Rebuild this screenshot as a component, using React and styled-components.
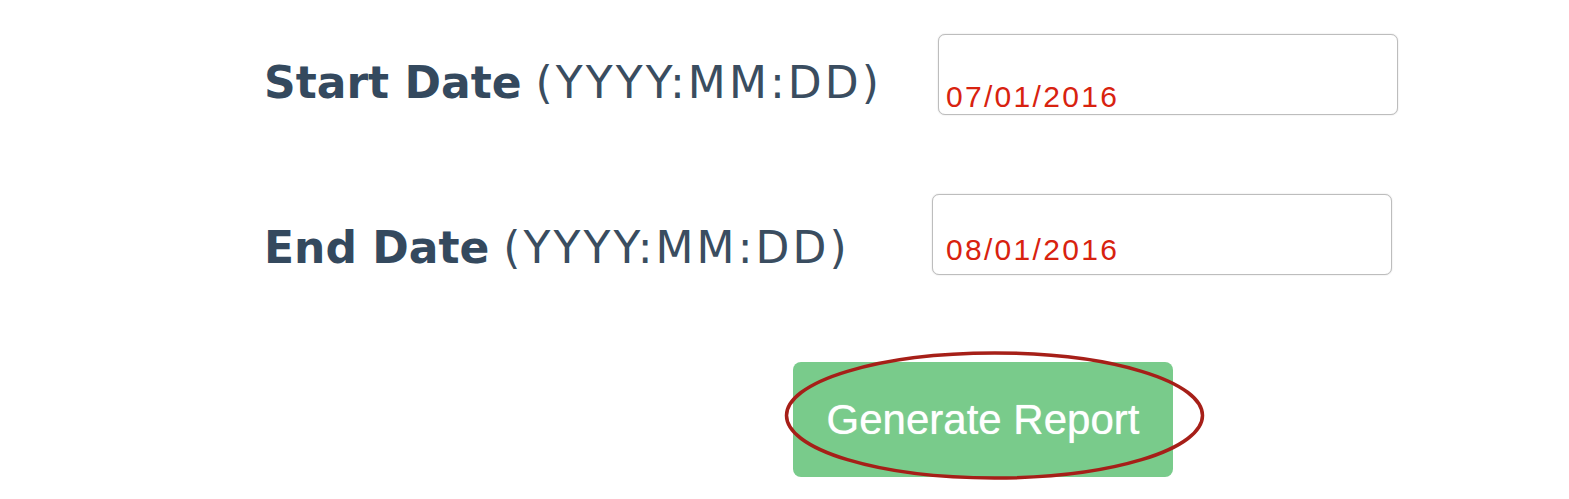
import styled, { createGlobalStyle } from "styled-components";

const GlobalStyle = createGlobalStyle`
  body {
    margin: 0;
    background: #ffffff;
  }
`;

const Page = styled.main`
  padding: 34px 0 0 264px;
  width: 1569px;
  height: 499px;
  box-sizing: border-box;
  overflow: hidden;
`;

const Row = styled.div`
  display: grid;
  grid-template-columns: 674px 460px;
  align-items: start;
  margin-bottom: ${(p) => p.$gap}px;
`;

const Label = styled.label`
  margin-top: ${(p) => p.$top}px;
  font-family: "DejaVu Sans", Verdana, sans-serif;
  font-size: 44px;
  line-height: 1;
  color: #34495e;
  white-space: nowrap;
  strong {
    font-weight: bold;
  }
`;

const Format = styled.span`
  letter-spacing: 3.1px;
  color: #3a4d60;
`;

const DateInput = styled.input`
  box-sizing: border-box;
  width: 460px;
  height: 81px;
  margin-left: ${(p) => p.$nudge || 0}px;
  padding: ${(p) => p.$padTop}px 6px 0 ${(p) => p.$padLeft}px;
  border: 1px solid #bdbdbd;
  border-radius: 7px;
  box-shadow: 0 0 1.5px rgba(0, 0, 0, 0.2);
  background: #ffffff;
  font-family: "Liberation Sans", Arial, sans-serif;
  font-size: 30px;
  letter-spacing: 2.3px;
  color: #d8220f;
  outline: none;
`;

const ButtonWrap = styled.div`
  position: relative;
  width: 380px;
  margin-left: 529px;
`;

const Button = styled.button`
  width: 380px;
  height: 115px;
  border: none;
  border-radius: 8px;
  background: #79cb8b;
  color: #ffffff;
  font-family: "Liberation Sans", Arial, sans-serif;
  font-size: 42px;
  text-shadow: 0 0 1px rgba(255, 255, 255, 0.8);
  cursor: pointer;
`;

const Circle = styled.svg`
  position: absolute;
  left: -9px;
  top: -12px;
  pointer-events: none;
`;

export default function App() {
  return (
    <>
      <GlobalStyle />
      <Page>
        <Row $gap={79}>
          <Label $top={27}>
            <strong>Start Date</strong> <Format>(YYYY:MM:DD)</Format>
          </Label>
          <DateInput readOnly defaultValue="07/01/2016" $padTop={44} $padLeft={7} />
        </Row>
        <Row $gap={87}>
          <Label $top={32}>
            <strong>End Date</strong> <Format>(YYYY:MM:DD)</Format>
          </Label>
          <DateInput
            readOnly
            defaultValue="08/01/2016"
            $padTop={30}
            $padLeft={13}
            $nudge={-6}
          />
        </Row>
        <ButtonWrap>
          <Button type="button">Generate Report</Button>
          <Circle width="422" height="134" viewBox="0 0 422 134">
            <ellipse
              cx="210.5"
              cy="65.5"
              rx="208"
              ry="62.5"
              fill="none"
              stroke="#a61f18"
              strokeWidth="3.5"
            />
          </Circle>
        </ButtonWrap>
      </Page>
    </>
  );
}
